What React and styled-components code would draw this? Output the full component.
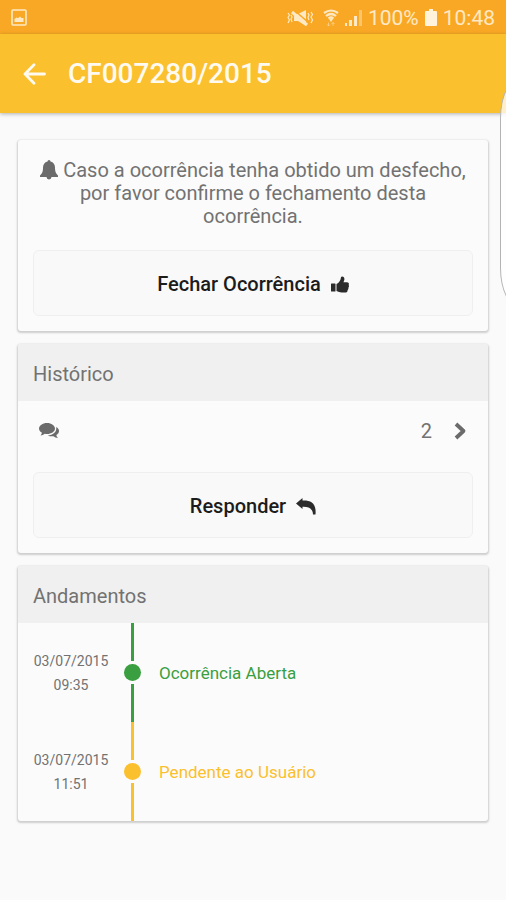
import React from "react";
import styled, { createGlobalStyle } from "styled-components";

const events = [
  { date: "03/07/2015", time: "09:35", label: "Ocorrência Aberta", color: "#3a9f40" },
  { date: "03/07/2015", time: "11:51", label: "Pendente ao Usuário", color: "#fbc02d" },
];

function App() {
  return (
    <Screen>
      <GlobalStyle />
      <StatusBar>
        <PictureIcon />
        <StatusIcons>
          <MuteIcon />
          <WifiIcon />
          <SignalIcon />
          <span>100%</span>
          <BatteryIcon />
          <span>10:48</span>
        </StatusIcons>
      </StatusBar>
      <AppBar>
        <BackButton aria-label="Voltar">
          <BackIcon />
        </BackButton>
        <h1>CF007280/2015</h1>
      </AppBar>

      <Content>
        <Card>
          <Notice>
            <BellIcon /> Caso a ocorrência tenha obtido um desfecho, por favor
            confirme o fechamento desta ocorrência.
          </Notice>
          <ActionButton>
            Fechar Ocorrência
            <ThumbIcon />
          </ActionButton>
        </Card>

        <Card>
          <CardHeader>Histórico</CardHeader>
          <MessagesLink href="#mensagens" aria-label="2 mensagens">
            <CommentsIcon />
            <Count>2</Count>
            <ChevronIcon />
          </MessagesLink>
          <ActionButton>
            Responder
            <ReplyIcon />
          </ActionButton>
        </Card>

        <Card>
          <CardHeader>Andamentos</CardHeader>
          <Timeline>
            {events.map((event) => (
              <TimelineItem key={event.label} $color={event.color}>
                <time>
                  {event.date}
                  <br />
                  {event.time}
                </time>
                <Track>
                  <Line />
                  <Dot />
                  <Line />
                </Track>
                <p>{event.label}</p>
              </TimelineItem>
            ))}
          </Timeline>
        </Card>
      </Content>
      <EdgeHandle />
    </Screen>
  );
}

export default App;

const PictureIcon = () => (
  <svg width="16" height="17" viewBox="0 0 16 17" fill="none">
    <rect x="1" y="1" width="14" height="15" rx="1" stroke="#ffe9c4" strokeWidth="1.6" />
    <path d="M3.500 13V10l2-1.500 1.500.8L9 7.500l1.500 1.500h2v4z" fill="#ffe9c4" />
  </svg>
);

const MuteIcon = () => (
  <svg width="30" height="18" viewBox="0 0 30 18" fill="none">
    <path d="M7 5h4l8-4v16l-8-5H7z" fill="#ffe9c4" />
    <path d="M7 1l15 13" stroke="#f9a825" strokeWidth="1.6" />
    <path d="M5 3l15 13" stroke="#ffe9c4" strokeWidth="3" />
    <path
      d="M1 4l1.500 2L1 8.500 2.500 11 1 14M4 6l1 2-1 2 1 3M21 4l1 2-1 2.500 1 2.500M24 3l1.500 2.500L24 8l1.500 3-1.500 3"
      stroke="#ffe9c4"
      strokeWidth="1.2"
    />
  </svg>
);

const WifiIcon = () => (
  <svg width="16" height="18" viewBox="0 0 16 18" fill="none">
    <path
      d="M1 4q7-5 14 0M3 7q5-4 10 0M5.500 9.500q2.500-2 5 0"
      stroke="#ffe9c4"
      strokeWidth="2.200"
    />
    <path d="M6 10h4l-2 3z" fill="#ffe9c4" />
    <path
      d="M5.500 13.500v3.500M4 15.500L5.500 17 7 15.500M10 17v-3.500M8.500 15l1.500-1.500 1.500 1.500"
      stroke="#ffe9c4"
      opacity=".5"
    />
  </svg>
);

const SignalIcon = () => (
  <svg width="17" height="17" viewBox="0 0 17 17" fill="#ffe9c4">
    <path d="M0 14h2v3H0zM4 11h3v6H4zM9 7h3v10H9z" />
    <path d="M14 1h3v16h-3z" opacity=".45" />
  </svg>
);

const BatteryIcon = () => (
  <svg width="12" height="17" viewBox="0 0 12 17" fill="#fff3dc">
    <path d="M4 0h4v2h3q1 0 1 1v13q0 1-1 1H1q-1 0-1-1V3q0-1 1-1h3z" />
  </svg>
);

const BackIcon = () => (
  <svg width="23" height="22" viewBox="0 0 23 22" fill="none">
    <path
      d="M21.500 11H2M11 1.800L2 11l9 9.200"
      stroke="#fffaf0"
      strokeWidth="2.800"
      strokeLinecap="round"
      strokeLinejoin="round"
    />
  </svg>
);

const BellIcon = () => (
  <svg width="18" height="20" viewBox="0 0 18 20" fill="#6b6b6b">
    <path d="M9 0a1.500 1.500 0 0 1 1.500 1.500C13.500 2.200 15 4.500 15 7.500c0 4.500 1 6 3 8V17H0v-1.500c2-2 3-3.500 3-8 0-3 1.500-5.300 4.500-6A1.500 1.500 0 0 1 9 0z" />
    <path d="M6.500 17h5a2.500 2.500 0 0 1-5 0z" />
  </svg>
);

const ThumbIcon = () => (
  <svg width="18" height="17" viewBox="0 0 18 17" fill="#2b2b2b">
    <path d="M.5 7.500H4q.5 0 .5.500v7q0 .5-.5.500H.5q-.5 0-.5-.5V8q0-.5.500-.5z" />
    <path d="M5.500 8c2-1 3-2.500 4-4.500.4-1.300.3-3 1.600-3C12.700.5 13.400 1.800 13.400 3c0 1.300-.6 2.200-.9 3.200H16c1.600 0 2.400 1.500 1.600 2.700.6.900.5 2-.2 2.700.2 1-.1 1.900-.8 2.300.1 1.700-.8 2.600-2.600 2.600-3 .2-5.500-.2-8.500-1.500z" />
  </svg>
);

const CommentsIcon = () => (
  <svg width="20" height="17" viewBox="0 0 20 17" fill="#6b6b6b">
    <path d="M8 1c4.400 0 8 2.500 8 5.500S12.400 12 8 12q-1.200 0-2.200-.2Q4 13.300 1.500 13.500q1-1 1.500-2.700C1.200 9.800 0 8.300 0 6.500 0 3.500 3.600 1 8 1z" />
    <path d="M17.200 5c1.700 1 2.800 2.400 2.800 4 0 1.600-1 3-2.700 4q.4 1.800 1.700 3-2.700-.2-4.600-1.800-3 .5-5.600-.7c4.800-.2 9.300-3.300 8.400-8.500z" />
  </svg>
);

const ChevronIcon = () => (
  <svg width="13" height="18" viewBox="0 0 13 18" fill="none">
    <path
      d="M2 2l7.500 7L2 16"
      stroke="#6b6b6b"
      strokeWidth="3.800"
      strokeLinejoin="round"
    />
  </svg>
);

const ReplyIcon = () => (
  <svg width="20" height="17" viewBox="0 0 20 17" fill="#2b2b2b">
    <path d="M0 5.500L6.500 0v2.500c8.500-.3 14 2.500 13 14h-2.500C17 11.500 13.500 8.500 6.500 8.800V11z" />
  </svg>
);

const GlobalStyle = createGlobalStyle`
  * {
    box-sizing: border-box;
  }
  body {
    margin: 0;
    background-color: #fafafa;
    font-family: Roboto, sans-serif;
    color: #727272;
  }
  svg {
    flex-shrink: 0;
  }
`;

const Screen = styled.div`
  position: relative;
  min-height: 100vh;
  overflow: hidden;
`;

const StatusBar = styled.div`
  display: flex;
  align-items: center;
  justify-content: space-between;
  height: 34px;
  padding: 1px 11px 0;
  background-color: #f9a825;
`;

const StatusIcons = styled.div`
  display: flex;
  align-items: center;
  gap: 6px;
  font-size: 21px;
  color: #ffe9c4;
`;

const AppBar = styled.header`
  display: flex;
  align-items: center;
  height: 79px;
  padding: 0 23px;
  background-color: #fbc02d;
  box-shadow: 0 1px 4px rgba(0, 0, 0, 0.3);

  > h1 {
    margin: 0 0 0 22px;
    font-size: 28px;
    font-weight: 500;
    color: #fffaf0;
  }
`;

const BackButton = styled.button`
  display: flex;
  padding: 0;
  border: none;
  background: none;
  cursor: pointer;
`;

const Content = styled.main`
  display: flex;
  flex-direction: column;
  gap: 13px;
  padding: 27px 18px;
`;

const Card = styled.section`
  display: flex;
  flex-direction: column;
  border-radius: 3px;
  overflow: hidden;
  background-color: #fbfbfb;
  box-shadow: 0 1px 2px 1px rgba(0, 0, 0, 0.18);
`;

const CardHeader = styled.h2`
  margin: 0;
  padding: 3px 15px 0;
  font-size: 20px;
  font-weight: 400;
  line-height: 54px;
  background-color: #f0f0f0;
`;

const Notice = styled.p`
  margin: 0;
  padding: 19px 15px 7px;
  font-size: 20px;
  line-height: 23px;
  text-align: center;

  > svg {
    vertical-align: -3px;
  }
`;

const ActionButton = styled.button`
  display: flex;
  align-items: center;
  justify-content: center;
  gap: 10px;
  height: 66px;
  margin: 15px;
  padding: 2px 0 0;
  border: 1px solid #efefef;
  border-radius: 6px;
  background-color: #f9f9f9;
  font-family: inherit;
  font-size: 20px;
  font-weight: 500;
  color: #1c1c1c;
  cursor: pointer;
`;

const MessagesLink = styled.a`
  display: flex;
  align-items: center;
  height: 56px;
  padding: 3px 21px 0;
  color: inherit;
  text-decoration: none;
`;

const Count = styled.span`
  margin-left: auto;
  margin-right: 22px;
  font-size: 20px;
`;

const Timeline = styled.ol`
  margin: 0;
  padding: 0;
  list-style: none;
`;

const TimelineItem = styled.li`
  display: flex;
  align-items: center;
  height: 99px;
  padding: 0 15px;
  color: ${(props) => props.$color};

  > time {
    width: 76px;
    font-size: 14px;
    line-height: 24px;
    text-align: center;
    color: #727272;
  }

  > p {
    margin: 0;
    font-size: 17px;
  }
`;

const Track = styled.div`
  display: flex;
  flex-direction: column;
  align-items: center;
  gap: 3px;
  align-self: stretch;
  width: 17px;
  margin: 0 18px 0 15px;
`;

const Line = styled.span`
  flex: 1;
  width: 3px;
  background-color: currentColor;
`;

const Dot = styled.span`
  width: 17px;
  height: 17px;
  border-radius: 50%;
  background-color: currentColor;
`;

// Samsung edge panel handle, floats over the page on the right side
const EdgeHandle = styled.div`
  position: absolute;
  top: 78px;
  right: -35px;
  width: 41px;
  height: 230px;
  border: 1px solid #b4b4b4;
  border-radius: 20px / 40px;
  background-color: rgba(255, 255, 255, 0.75);
`;
